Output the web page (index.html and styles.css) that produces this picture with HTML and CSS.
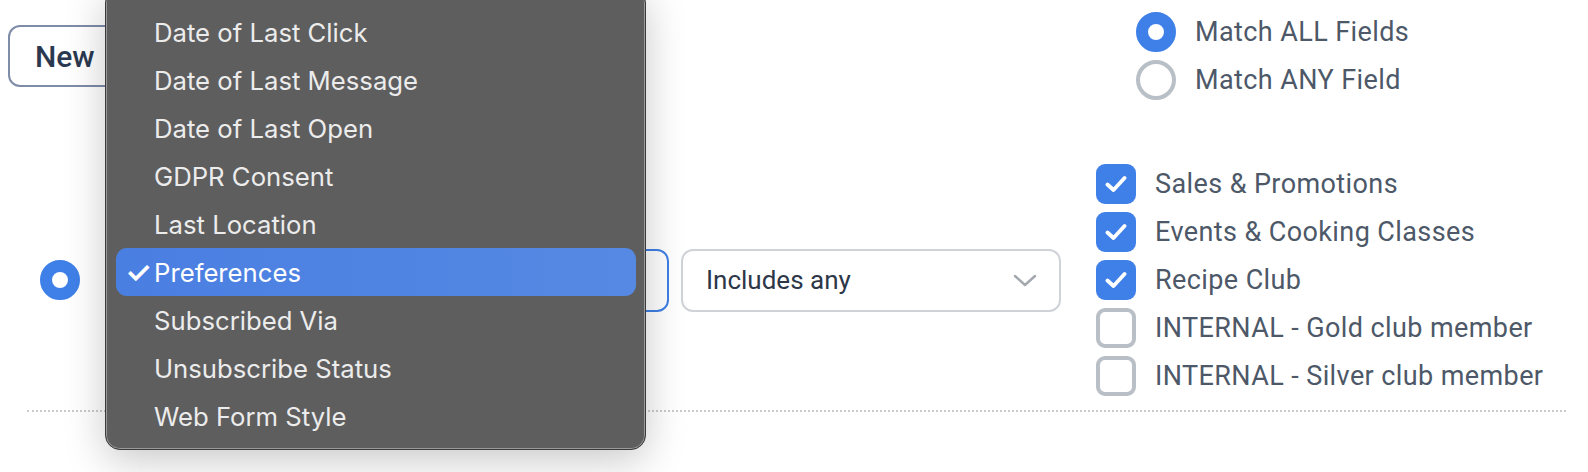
FILE: index.html
```html
<!DOCTYPE html>
<html lang="en">
<head>
  <meta charset="UTF-8">
  <title>Segment Conditions</title>
  <link rel="stylesheet" href="styles.css">
</head>
<body>
  <div class="segment-page">
    <!-- Header: new condition + match mode -->
    <div class="segment-header">
      <button type="button" class="new-btn">New</button>
      <div class="match-group">
        <label class="radio-row">
          <span class="radio-dot checked"></span>
          <span>Match ALL Fields</span>
        </label>
        <label class="radio-row">
          <span class="radio-dot"></span>
          <span>Match ANY Field</span>
        </label>
      </div>
    </div>

    <!-- Condition row -->
    <div class="condition-row">
      <span class="radio-dot checked"></span>
      <div class="field-select focused"></div>
      <div class="field-select op-select">
        <span>Includes any</span>
        <svg class="chevron" width="24" height="14" viewBox="0 0 24 14"><path d="M2 2 L12 11 L22 2" fill="none" stroke="#a3a8ae" stroke-width="2.4" stroke-linecap="round" stroke-linejoin="round"/></svg>
      </div>
      <div class="check-list">
        <label class="check-row"><span class="check-box checked"><svg width="22" height="18" viewBox="0 0 22 18"><path d="M2.5 9.5 L8.5 15 L19.5 3" fill="none" stroke="#fff" stroke-width="3.8" stroke-linecap="round" stroke-linejoin="round"/></svg></span><span>Sales &amp; Promotions</span></label>
        <label class="check-row"><span class="check-box checked"><svg width="22" height="18" viewBox="0 0 22 18"><path d="M2.5 9.5 L8.5 15 L19.5 3" fill="none" stroke="#fff" stroke-width="3.8" stroke-linecap="round" stroke-linejoin="round"/></svg></span><span>Events &amp; Cooking Classes</span></label>
        <label class="check-row"><span class="check-box checked"><svg width="22" height="18" viewBox="0 0 22 18"><path d="M2.5 9.5 L8.5 15 L19.5 3" fill="none" stroke="#fff" stroke-width="3.8" stroke-linecap="round" stroke-linejoin="round"/></svg></span><span>Recipe Club</span></label>
        <label class="check-row"><span class="check-box"></span><span>INTERNAL - Gold club member</span></label>
        <label class="check-row"><span class="check-box"></span><span>INTERNAL - Silver club member</span></label>
      </div>
    </div>

    <div class="dotted-line"></div>
  </div>

  <!-- Native-looking popup menu for the field select -->
  <div class="popup-menu">
    <div class="menu-item">Date of Last Click</div>
    <div class="menu-item">Date of Last Message</div>
    <div class="menu-item">Date of Last Open</div>
    <div class="menu-item">GDPR Consent</div>
    <div class="menu-item">Last Location</div>
    <div class="menu-item selected"><span class="tick">✓</span><span>Preferences</span></div>
    <div class="menu-item">Subscribed Via</div>
    <div class="menu-item">Unsubscribe Status</div>
    <div class="menu-item">Web Form Style</div>
  </div>
</body>
</html>
```

FILE: styles.css
```css
body {
  margin: 0;
  background: #fff;
  font-family: Roboto, 'Liberation Sans', sans-serif;
  color: #4d5868;
  overflow: hidden;
}
.segment-page {
  padding: 8px 22px 0 8px;
}
.segment-header {
  display: flex;
  align-items: center;
  height: 96px;
}
.new-btn {
  height: 62px;
  width: 420px;
  text-align: left;
  padding: 0 0 0 25px;
  background: #fff;
  border: 2px solid #7f8ca8;
  border-radius: 12px;
  font-family: Roboto, sans-serif;
  font-size: 30px;
  font-weight: 500;
  color: #2b3950;
}
.match-group {
  margin-left: auto;
  width: 430px;
  display: flex;
  flex-direction: column;
}
.radio-row, .check-row {
  display: flex;
  align-items: center;
  height: 48px;
  font-size: 27px;
  letter-spacing: 0.4px;
  gap: 19px;
}
.radio-dot {
  flex: none;
  width: 40px;
  height: 40px;
  box-sizing: border-box;
  border-radius: 50%;
  border: 4px solid #b9bfc6;
  background: #fff;
}
.radio-dot.checked {
  border: 12.5px solid #3f80e8;
}
.condition-row {
  margin-top: 56px;
  height: 240px;
  display: flex;
  align-items: center;
  padding-left: 32px;
}
.field-select {
  box-sizing: border-box;
  height: 63px;
  border: 2px solid #cfd3d8;
  border-radius: 12px;
  display: flex;
  align-items: center;
  padding: 0 22px 0 23px;
  font-size: 26px;
  color: #2d3748;
}
.field-select.focused {
  margin-left: 32px;
  width: 557px;
  border-color: #3f7fe6;
}
.op-select {
  margin-left: 12px;
  width: 380px;
  justify-content: space-between;
}
.chevron { margin-top: 2px; }
.check-list {
  margin-left: 35px;
  display: flex;
  flex-direction: column;
}
.check-box {
  flex: none;
  width: 40px;
  height: 40px;
  box-sizing: border-box;
  border-radius: 9px;
  border: 4px solid #b9bfc6;
  background: #fff;
  display: flex;
  align-items: center;
  justify-content: center;
}
.check-box.checked {
  background: #3f80e8;
  border-color: #3f80e8;
}
.dotted-line {
  margin: 10px 0 0 19px;
  border-top: 2px dotted #cbcbcb;
}

/* popup menu */
.popup-menu {
  position: absolute;
  left: 105px;
  top: -12px;
  width: 541px;
  box-sizing: border-box;
  padding: 19px 9px 9px 10px;
  background: #5e5e5f;
  border: 1px solid #3a3a3a;
  border-radius: 15px;
  box-shadow: inset 0 0 0 1px #9a9a9a, 0 10px 40px rgba(0, 0, 0, 0.22);
  font-family: Inter, 'Noto Sans', sans-serif;
  font-size: 25.7px;
  color: #ececec;
}
.menu-item {
  height: 48px;
  display: flex;
  align-items: center;
  padding-left: 38px;
}
.menu-item.selected {
  padding-left: 9px;
  background: linear-gradient(90deg, #4a7fe2, #5589e3);
  border-radius: 11px;
  color: #fff;
}
.tick {
  width: 29px;
  font-size: 30px;
  font-weight: 600;
}
```
